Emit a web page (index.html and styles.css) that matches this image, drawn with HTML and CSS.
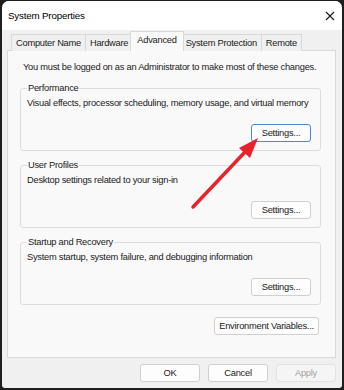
FILE: index.html
```html
<!DOCTYPE html>
<html lang="en">
<head>
  <meta charset="UTF-8">
  <meta name="viewport" content="width=device-width, initial-scale=1.0">
  <title>System Properties</title>
  <link rel="stylesheet" href="styles.css">
</head>
<body>
  <div class="window">
    <div class="titlebar">
      <span class="title">System Properties</span>
      <svg class="close" width="10" height="10" viewBox="0 0 10 10">
        <path d="M1 1 L9 9 M9 1 L1 9" stroke="#1a1a1a" stroke-width="1.1" fill="none"/>
      </svg>
    </div>

    <div class="tabs">
      <div class="tab">Computer Name</div>
      <div class="tab">Hardware</div>
      <div class="tab active">Advanced</div>
      <div class="tab">System Protection</div>
      <div class="tab">Remote</div>
    </div>

    <div class="panel">
      <p class="notice">You must be logged on as an Administrator to make most of these changes.</p>

      <fieldset class="group">
        <legend>Performance</legend>
        <p class="desc">Visual effects, processor scheduling, memory usage, and virtual memory</p>
        <div class="row"><button class="btn focused">Settings...</button></div>
      </fieldset>

      <fieldset class="group">
        <legend>User Profiles</legend>
        <p class="desc">Desktop settings related to your sign-in</p>
        <div class="row"><button class="btn">Settings...</button></div>
      </fieldset>

      <fieldset class="group">
        <legend>Startup and Recovery</legend>
        <p class="desc">System startup, system failure, and debugging information</p>
        <div class="row"><button class="btn">Settings...</button></div>
      </fieldset>

      <div class="env-row"><button class="btn wide">Environment Variables...</button></div>
    </div>

    <div class="footer">
      <button class="btn">OK</button>
      <button class="btn">Cancel</button>
      <button class="btn" disabled>Apply</button>
    </div>
  </div>

  <!-- annotation arrow drawn over the dialog -->
  <svg class="arrow" width="344" height="390" viewBox="0 0 344 390">
    <line x1="193" y1="207" x2="245" y2="152" stroke="#e8232b" stroke-width="3.5" stroke-linecap="round"/>
    <polygon points="258,138 239,148 250,158" fill="#e8232b"/>
  </svg>
</body>
</html>
```

FILE: styles.css
```css
body {
  margin: 0;
  width: 344px;
  height: 390px;
  position: relative;
  background-color: #1f1f1f;
  font-family: "Liberation Sans", Arial, sans-serif;
  font-size: 9.3px;
  letter-spacing: -0.25px;
  color: #1a1a1a;
  overflow: hidden;
}
.window {
  margin: 1px 2px 0 2px;
  height: 387px;
  background: #f0f0f0;
  border-radius: 7px 7px 3px 3px;
  overflow: hidden;
  display: flex;
  flex-direction: column;
}
.titlebar {
  height: 29px;
  flex-shrink: 0;
  background: #fff;
  display: flex;
  align-items: center;
  justify-content: space-between;
  padding: 0 7px 0 6px;
}
.title {
  font-size: 9.8px;
  letter-spacing: -0.2px;
  color: #000;
}
.close {
  display: block;
}
.tabs {
  display: flex;
  align-items: flex-end;
  height: 21px;
  flex-shrink: 0;
  padding-left: 9px;
  margin-bottom: -1px;
  position: relative;
  z-index: 1;
}
.tab {
  height: 16px;
  line-height: 16px;
  padding: 0 4px;
  border: 1px solid #d9d9d9;
  border-bottom: none;
  margin-right: -1px;
  background: #f0f0f0;
  white-space: nowrap;
}
.tab.active {
  height: 19px;
  line-height: 17px;
  padding: 0 6px;
  margin: 0 -3px 0 -2px;
  background: #f9f9f9;
  position: relative;
  z-index: 2;
}
.panel {
  box-sizing: border-box;
  margin: 0 6px 0 5px;
  height: 308px;
  flex-shrink: 0;
  background: #f9f9f9;
  border: 1px solid #d9d9d9;
  padding: 9px 14px 0 12px;
}
.notice {
  margin: 0 0 7px 3px;
  line-height: 14px;
  white-space: nowrap;
}
.group {
  margin: 0;
  padding: 0 9px 8px 6px;
  border: 1px solid #dcdcdc;
  border-radius: 3px;
}
.group + .group {
  margin-top: 7px;
}
.group legend {
  padding: 0 1px;
  line-height: 14px;
}
.desc {
  margin: 1px 0 0 0;
  line-height: 14px;
  white-space: nowrap;
}
.row {
  display: flex;
  justify-content: flex-end;
  margin-top: 14px;
}
.btn {
  width: 60px;
  height: 18px;
  padding: 0;
  border: 1px solid #d0d0d0;
  border-radius: 3px;
  background: #fdfdfd;
  font-family: inherit;
  font-size: 9.3px;
  letter-spacing: -0.25px;
  color: #1a1a1a;
  white-space: nowrap;
}
.btn.focused {
  border-color: #4a8ad4;
}
.btn.wide {
  width: 105px;
}
.btn:disabled {
  color: #a3a3a3;
  background: #f5f5f5;
  border-color: #e2e2e2;
}
.env-row {
  display: flex;
  justify-content: flex-end;
  margin: 12px 2px 0 0;
}
.footer {
  display: flex;
  justify-content: flex-end;
  gap: 8px;
  padding: 6px 6px 0 0;
}
.arrow {
  position: absolute;
  left: 0;
  top: 0;
  pointer-events: none;
}
```
